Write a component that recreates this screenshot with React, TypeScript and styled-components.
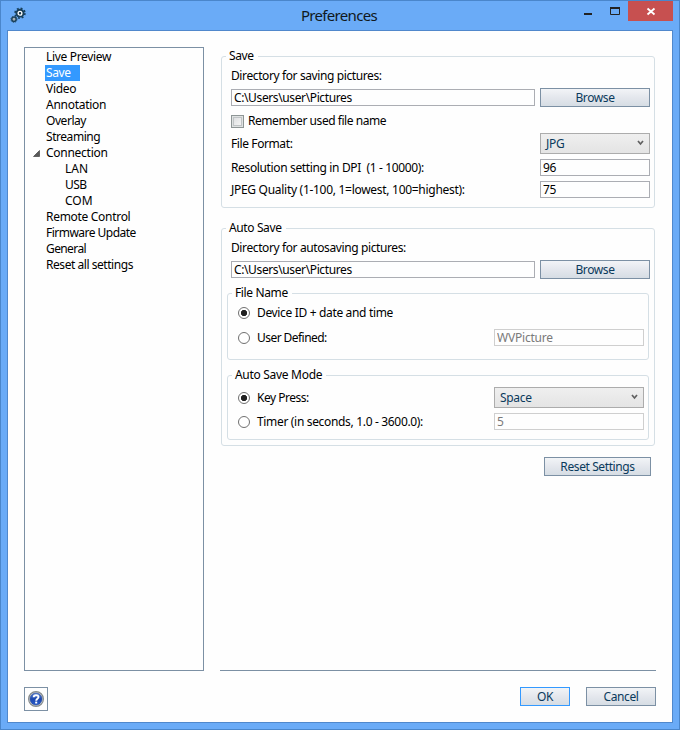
import React from 'react';
import styled, { createGlobalStyle } from 'styled-components';

const Global = createGlobalStyle`
  * { box-sizing: border-box; }
  body { margin: 0; font: 12px/16px "Noto Sans", "Open Sans", sans-serif; color: #000; }
  button, input { font: inherit; margin: 0; }
`;

const Window = styled.div`
  width: 680px;
  height: 730px;
  border: 1px solid #4a86cb;
  background: #6aabf7;
  padding: 0 6px 6px;
  display: flex;
  flex-direction: column;
`;
const TitleBar = styled.header`
  height: 29px;
  display: flex;
  align-items: flex-start;
  justify-content: space-between;
`;
const TitleSide = styled.div`
  width: 102px;
  display: flex;
  flex: none;
`;
const AppIcon = styled.svg`
  margin: 5px 0 0 3px;
`;
const Title = styled.h1`
  margin: 4px 2px 0 0;
  font-size: 15px;
  line-height: 20px;
  font-weight: 400;
  letter-spacing: -0.68px;
  color: #101820;
`;
const CaptionButton = styled.button<{ $w: number; $close?: boolean }>`
  width: ${p => p.$w}px;
  height: 20px;
  padding: 0;
  border: 0;
  background: ${p => (p.$close ? '#c75050' : 'transparent')};
  display: flex;
`;
const Client = styled.main`
  flex: 1;
  border: 1px solid #5088cc;
  background: #fefefe;
  padding: 16px 16px 11px;
  display: flex;
  flex-direction: column;
`;
const Body = styled.div`
  height: 624px;
  display: flex;
  gap: 16px;
`;
const Tree = styled.nav`
  width: 180px;
  border: 1px solid #7c90a4;
  background: #fefefe;
  padding-top: 1px;
`;
const TreeRow = styled.div<{ $level: number }>`
  height: 16px;
  display: flex;
  padding-left: ${p => 8 + p.$level * 19}px;
`;
const Expander = styled.span`
  width: 12px;
  display: flex;
  align-items: center;
`;
const TreeLabel = styled.span<{ $selected?: boolean; $ls: number }>`
  padding: 0 ${p => (p.$selected ? 9 : 1)}px 0 1px;
  white-space: nowrap;
  letter-spacing: ${p => p.$ls}px;
  color: ${p => (p.$selected ? '#fff' : '#000')};
  background: ${p => (p.$selected ? '#3399ff' : 'transparent')};
`;
const Panel = styled.section`
  flex: 1;
  border-bottom: 1px solid #7c90a4;
  padding: 9px 1px 0;
  display: flex;
  flex-direction: column;
`;
const Group = styled.div<{ $h: number }>`
  height: ${p => p.$h}px;
  flex: none;
  border: 1px solid #d5dfe5;
  border-radius: 3px;
  padding: 0 4px 0 9px;
  & + & { margin-top: 20px; }
`;
const SubGroup = styled(Group)<{ $gap: number }>`
  margin: ${p => p.$gap}px 1px 0 -4px;
  padding: 0 4px 0 10px;
  && { margin-top: ${p => p.$gap}px; }
`;
const Legend = styled.div<{ $ls: number }>`
  width: fit-content;
  height: 16px;
  margin: -9px 0 0 -5px;
  padding: 0 4px 0 3px;
  background: #fefefe;
  letter-spacing: ${p => p.$ls}px;
  ${SubGroup} > & { margin-left: -6px; }
`;
const Row = styled.div<{ $top: number; $h: number }>`
  margin-top: ${p => p.$top}px;
  height: ${p => p.$h}px;
  display: flex;
  align-items: center;
`;
const Label = styled.label<{ $ls: number; $indent?: number }>`
  flex: 1;
  margin-left: ${p => p.$indent ?? 0}px;
  white-space: pre;
  letter-spacing: ${p => p.$ls}px;
`;
const Field = styled.input<{ $w: number }>`
  width: ${p => p.$w}px;
  height: 17px;
  border: 1px solid #abadb3;
  border-radius: 0;
  background: #fefefe;
  padding: 0 2px;
  color: #000;
  outline: none;
  letter-spacing: -0.38px;
  &:disabled { border-color: #cfcfcf; color: #7a7a7a; letter-spacing: -0.2px; }
`;
const PushButton = styled.button<{ $w: number; $primary?: boolean }>`
  width: ${p => p.$w}px;
  height: 19px;
  flex: none;
  padding: 0;
  line-height: 16px;
  letter-spacing: -0.4px;
  color: #0a3a5c;
  border: 1px solid ${p => (p.$primary ? '#3399ff' : '#7c90a4')};
  background: linear-gradient(#f2f4f7, #e4e7ed 50%, #d6dde4);
`;
const Select = styled.button<{ $w: number }>`
  width: ${p => p.$w}px;
  height: 21px;
  padding: 0 5px;
  border: 1px solid #acacac;
  background: linear-gradient(#efefef, #e4e4e4);
  color: #0a3a5c;
  letter-spacing: -0.3px;
  display: flex;
  align-items: center;
  justify-content: space-between;
`;
const Check = styled.span`
  width: 13px;
  height: 13px;
  border: 1px solid #8e9696;
  background: linear-gradient(135deg, #d8dadc, #fafafa);
  box-shadow: inset 0 0 0 1px #dfe2e2, inset 0 0 0 2px #c0c4c6;
`;
const Radio = styled.span<{ $on?: boolean }>`
  width: 12px;
  height: 12px;
  border: 1px solid #707070;
  border-radius: 50%;
  background: ${p => (p.$on ? 'radial-gradient(circle, #222 2.8px, #fff 3.5px)' : '#fff')};
`;
const Spacer = styled.span<{ $w: number }>`
  width: ${p => p.$w}px;
  flex: none;
`;
const ResetRow = styled.div`
  margin: 11px 4px 0 0;
  display: flex;
  justify-content: flex-end;
`;
const Footer = styled.footer`
  margin-top: 16px;
  display: flex;
  align-items: flex-start;
  gap: 16px;
`;
const HelpButton = styled.button`
  width: 24px;
  height: 24px;
  padding: 0;
  margin-right: auto;
  border: 1px solid #7c90a4;
  background: #fefefe;
  display: flex;
  align-items: center;
  justify-content: center;
`;

const Chevron = () => (
  <svg width="7" height="7" viewBox="0 0 7 7">
    <path d="M1 1L3.5 4L6 1" fill="none" stroke="#606060" strokeWidth="1.7" />
  </svg>
);

const Gears = () => (
  <AppIcon width="18" height="18" viewBox="0 0 18 18">
    <circle cx="10" cy="7.2" r="4.4" fill="#173f5b" />
    <circle cx="10" cy="7.2" r="4.9" fill="none" stroke="#173f5b" strokeWidth="1.7" strokeDasharray="1.9 1.95" />
    <circle cx="10" cy="7.2" r="1.9" fill="#18384d" stroke="#fff" strokeWidth="1.3" />
    <circle cx="4" cy="13.3" r="2.2" fill="#a8b0b3" stroke="#173f5b" strokeWidth="1.5" />
    <circle cx="4" cy="13.3" r="3.1" fill="none" stroke="#31566f" strokeWidth="1" strokeDasharray="1.2 1.2" />
  </AppIcon>
);

const HelpIcon = () => (
  <svg width="16" height="16" viewBox="0 0 16 16">
    <defs>
      <linearGradient id="helpFill" x2="0" y2="1">
        <stop offset="0" stopColor="#5c86da" />
        <stop offset="0.5" stopColor="#1b46ad" />
        <stop offset="1" stopColor="#285bcd" />
      </linearGradient>
    </defs>
    <circle cx="8" cy="8" r="7.4" fill="#d7d9d8" stroke="#858b8c" strokeWidth="1.2" />
    <circle cx="8" cy="8" r="6" fill="url(#helpFill)" stroke="#26489a" strokeWidth="0.6" />
    <path d="M5.7 6.3C5.7 3.5 10.5 3.6 10.5 6C10.5 7.8 8.2 7.6 8.2 9.7" fill="none" stroke="#fff" strokeWidth="1.9" />
    <rect x="7.2" y="10.6" width="2" height="1.9" fill="#fff" />
  </svg>
);

const items: { text: string; level?: number; ls: number; open?: boolean; selected?: boolean }[] = [
  { text: 'Live Preview', ls: -0.32 },
  { text: 'Save', ls: -0.35, selected: true },
  { text: 'Video', ls: -0.3 },
  { text: 'Annotation', ls: -0.28 },
  { text: 'Overlay', ls: -0.45 },
  { text: 'Streaming', ls: -0.45 },
  { text: 'Connection', ls: -0.27, open: true },
  { text: 'LAN', ls: 0, level: 1 },
  { text: 'USB', ls: -0.5, level: 1 },
  { text: 'COM', ls: 0, level: 1 },
  { text: 'Remote Control', ls: -0.3 },
  { text: 'Firmware Update', ls: -0.52 },
  { text: 'General', ls: -0.6 },
  { text: 'Reset all settings', ls: -0.45 },
];

export default function App() {
  return (
    <>
      <Global />
      <Window>
        <TitleBar>
          <TitleSide><Gears /></TitleSide>
          <Title>Preferences</Title>
          <TitleSide>
            <CaptionButton $w={30} aria-label="Minimize">
              <svg width="30" height="20"><rect x="13" y="12" width="8" height="2" fill="#222" /></svg>
            </CaptionButton>
            <CaptionButton $w={27} aria-label="Maximize">
              <svg width="27" height="20">
                <path d="M9.5 7V13.5H18.5V7" fill="none" stroke="#222" />
                <rect x="9" y="6" width="10" height="2" fill="#222" />
              </svg>
            </CaptionButton>
            <CaptionButton $w={45} $close aria-label="Close">
              <svg width="45" height="20">
                <path d="M19.5 7.5L26.5 13.5M26.5 7.5L19.5 13.5" stroke="#fff" strokeWidth="1.8" />
              </svg>
            </CaptionButton>
          </TitleSide>
        </TitleBar>
        <Client>
          <Body>
            <Tree>
              {items.map(i => (
                <TreeRow key={i.text} $level={i.level ?? 0}>
                  <Expander>
                    {i.open && <svg width="7" height="7"><path d="M0.5 6.5H6.5V0.5Z" fill="#595959" stroke="#333" strokeWidth="0.6" /></svg>}
                  </Expander>
                  <TreeLabel $selected={i.selected} $ls={i.ls}>{i.text}</TreeLabel>
                </TreeRow>
              ))}
            </Tree>
            <Panel>
              <Group $h={152}>
                <Legend $ls={-0.35}>Save</Legend>
                <Row $top={4} $h={16}><Label $ls={-0.39}>Directory for saving pictures:</Label></Row>
                <Row $top={4} $h={19}>
                  <Field $w={304} defaultValue="C:\Users\user\Pictures" />
                  <Spacer $w={5} />
                  <PushButton $w={110}>Browse</PushButton>
                </Row>
                <Row $top={5} $h={18}><Check /><Label $ls={-0.45} $indent={4}>Remember used file name</Label></Row>
                <Row $top={3} $h={21}>
                  <Label $ls={-0.4}>File Format:</Label>
                  <Select $w={110}>JPG<Chevron /></Select>
                </Row>
                <Row $top={5} $h={17}>
                  <Label $ls={-0.36}>{'Resolution setting in DPI  (1 - 10000):'}</Label>
                  <Field $w={110} defaultValue="96" />
                </Row>
                <Row $top={5} $h={17}>
                  <Label $ls={-0.29}>JPEG Quality (1-100, 1=lowest, 100=highest):</Label>
                  <Field $w={110} defaultValue="75" />
                </Row>
              </Group>
              <Group $h={218}>
                <Legend $ls={-0.38}>Auto Save</Legend>
                <Row $top={4} $h={16}><Label $ls={-0.39}>Directory for autosaving pictures:</Label></Row>
                <Row $top={4} $h={19}>
                  <Field $w={304} defaultValue="C:\Users\user\Pictures" />
                  <Spacer $w={5} />
                  <PushButton $w={110}>Browse</PushButton>
                </Row>
                <SubGroup $h={67} $gap={14}>
                  <Legend $ls={-0.37}>File Name</Legend>
                  <Row $top={3} $h={18}><Radio $on /><Label $ls={-0.34} $indent={7}>Device ID + date and time</Label></Row>
                  <Row $top={7} $h={17}>
                    <Radio /><Label $ls={-0.55} $indent={7}>User Defined:</Label>
                    <Field $w={150} disabled defaultValue="WVPicture" />
                  </Row>
                </SubGroup>
                <SubGroup $h={65} $gap={15}>
                  <Legend $ls={-0.3}>Auto Save Mode</Legend>
                  <Row $top={4} $h={21}>
                    <Radio $on /><Label $ls={-0.5} $indent={7}>Key Press:</Label>
                    <Select $w={150}>Space<Chevron /></Select>
                  </Row>
                  <Row $top={5} $h={17}>
                    <Radio /><Label $ls={-0.33} $indent={7}>Timer (in seconds, 1.0 - 3600.0):</Label>
                    <Field $w={150} disabled defaultValue="5" />
                  </Row>
                </SubGroup>
              </Group>
              <ResetRow><PushButton $w={107}>Reset Settings</PushButton></ResetRow>
            </Panel>
          </Body>
          <Footer>
            <HelpButton aria-label="Help"><HelpIcon /></HelpButton>
            <PushButton $w={50} $primary>OK</PushButton>
            <PushButton $w={70}>Cancel</PushButton>
          </Footer>
        </Client>
      </Window>
    </>
  );
}
